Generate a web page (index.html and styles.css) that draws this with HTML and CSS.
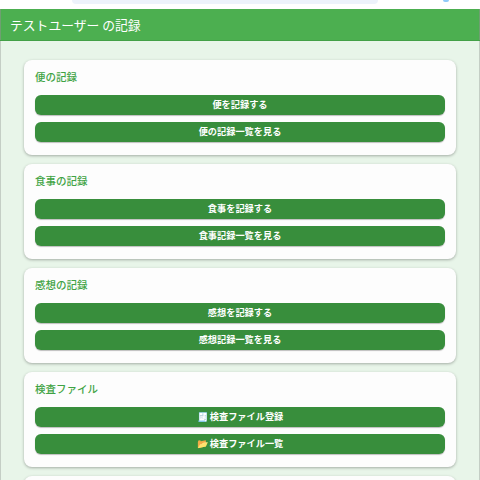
FILE: index.html
```html
<!DOCTYPE html>
<html lang="ja">
<head>
<meta charset="utf-8">
<title>記録</title>
<link rel="stylesheet" href="styles.css">
</head>
<body>
<div class="topbar"><div class="pill"></div><div class="dot"></div></div>
<header class="header">テストユーザー の記録</header>
<main class="main">
  <section class="card">
    <h2 class="title">便の記録</h2>
    <a class="btn">便を記録する</a>
    <a class="btn">便の記録一覧を見る</a>
  </section>
  <section class="card">
    <h2 class="title">食事の記録</h2>
    <a class="btn">食事を記録する</a>
    <a class="btn">食事記録一覧を見る</a>
  </section>
  <section class="card">
    <h2 class="title">感想の記録</h2>
    <a class="btn">感想を記録する</a>
    <a class="btn">感想記録一覧を見る</a>
  </section>
  <section class="card">
    <h2 class="title">検査ファイル</h2>
    <a class="btn">🧾 検査ファイル登録</a>
    <a class="btn">📂 検査ファイル一覧</a>
  </section>
  <section class="card"></section>
</main>
</body>
</html>
```
FILE: styles.css
```css
html, body {
  margin: 0;
  padding: 0;
  height: 480px;
  overflow: hidden;
}
body {
  background: #e8f5e9;
  font-family: "Noto Sans CJK JP", "Noto Sans", sans-serif;
}
.topbar {
  height: 9px;
  background: #fff;
  display: flex;
  padding-left: 72px;
}
.pill {
  width: 306px;
  height: 4px;
  background: #edf2fb;
  border-radius: 0 0 10px 10px;
}
.dot {
  width: 6px;
  height: 2px;
  margin-left: 65px;
  background: #90caf9;
  border-radius: 0 0 3px 3px;
}
.header {
  height: 32px;
  box-sizing: border-box;
  background: #4caf50;
  color: #fff;
  font-size: 12.8px;
  line-height: 31px;
  padding-left: 10px;
  border-bottom: 1px solid #43a047;
  box-shadow: inset 1px 0 0 #6f9f71, inset -1px 0 0 #6f9f71;
}
.main {
  height: 439px;
  box-sizing: border-box;
  overflow: hidden;
  padding: 19px 24px 0;
  display: flex;
  flex-direction: column;
  gap: 9px;
  box-shadow: inset 1px 0 0 #c4cec5, inset -1px 0 0 #c4cec5;
}
.card {
  background: #fdfdfd;
  border-radius: 8px;
  box-shadow: 0 1px 3px rgba(0, 0, 0, 0.3);
  padding: 11px;
  height: 95px;
  box-sizing: border-box;
  display: flex;
  flex-direction: column;
  gap: 7px;
  flex: none;
}
.title {
  margin: 0 0 6px;
  font-size: 10.5px;
  font-weight: 500;
  color: #3fa344;
  line-height: 12px;
  height: 11px;
}
.btn {
  display: block;
  height: 20px;
  line-height: 19px;
  background: #388e3c;
  color: #fff;
  border-radius: 6px;
  font-size: 9.2px;
  font-weight: 700;
  text-align: center;
  box-shadow: 0 1px 1px rgba(0, 0, 0, 0.25);
}
```
